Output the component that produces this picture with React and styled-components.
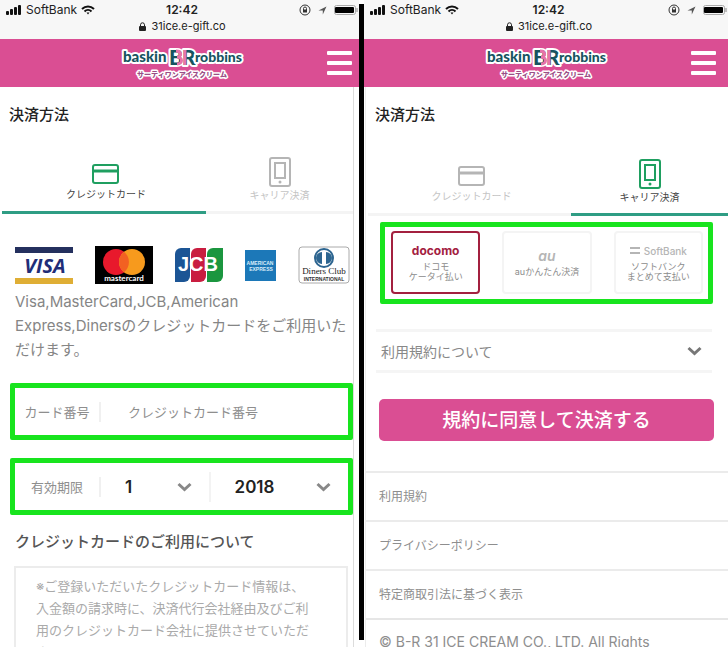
import React, { useState } from 'react';
import styled, { createGlobalStyle } from 'styled-components';

const GlobalStyle = createGlobalStyle`
* {
  box-sizing: border-box;
}
body {
  margin: 0;
  overflow: hidden;
  background: #fff;
  font-family: Inter, "Noto Sans CJK JP", sans-serif;
}
button, input, select {
  font-family: inherit;
}
`

const Page = styled.div`
display: grid;
grid-template-columns: minmax(0, 359fr) 5px minmax(0, 364fr);
height: 100vh;
overflow: hidden;
`

const Divider = styled.div`
background: #000;
margin: 4px 0 7px;
`

const Screen = styled.section`
display: flex;
flex-direction: column;
min-width: 0;
overflow: hidden;
`

const StatusBar = styled.div`
background: #f7f7f7;
height: 39px;
flex-shrink: 0;
padding-top: 2px;
color: #222;
font-size: 12px;
line-height: 16px;
`

const StatusRow = styled.div`
display: grid;
grid-template-columns: 1fr auto 1fr;
align-items: center;
padding: 0 1px 0 6px;
`

const StatusGroup = styled.div`
display: flex;
align-items: center;
justify-content: ${(p) => (p.$end ? 'flex-end' : 'flex-start')};
gap: ${(p) => (p.$end ? 7 : 4)}px;
`

const Clock = styled.strong`
font-weight: 600;
`

const Address = styled.div`
display: flex;
align-items: center;
justify-content: center;
gap: 5px;
padding-left: 6px;
font-size: 11px;
`

const Header = styled.header`
background: #da4e93;
height: 48px;
flex-shrink: 0;
display: grid;
grid-template-columns: 1fr auto 1fr;
align-items: center;
padding-right: ${(p) => p.$right}px;
`

const MenuButton = styled.button`
grid-column: 3;
justify-self: end;
display: flex;
flex-direction: column;
gap: 6px;
padding: 0;
border: none;
background: none;
`

const MenuBar = styled.span`
width: 25px;
height: 4px;
border-radius: 1px;
background: #fff;
`

const LogoLink = styled.a`
grid-column: 2;
display: block;
margin-left: 12px;
height: 40px;
`

const Content = styled.main`
flex: 1;
min-height: 0;
overflow: hidden;
margin-right: ${(p) => (p.$edge === 'right' ? 5 : 0)}px;
margin-left: ${(p) => (p.$edge === 'left' ? 1 : 0)}px;
border-right: ${(p) => (p.$edge === 'right' ? '1px solid #dcdcdc' : 'none')};
border-left: ${(p) => (p.$edge === 'left' ? '1px solid #ececec' : 'none')};
`

const Title = styled.h1`
margin: 0;
padding: 17px 8px 0 9px;
font-size: 15px;
line-height: 22px;
font-weight: 500;
color: #222;
`

const Tabs = styled.div`
display: grid;
grid-template-columns: ${(p) => (p.$low ? '203fr 157fr' : '204fr 147fr')};
margin: ${(p) => (p.$low ? '20px 0 0' : '18px 0 0')};
padding-left: 2px;
`

const Tab = styled.button`
display: flex;
flex-direction: column;
align-items: center;
justify-content: flex-end;
gap: ${(p) => (p.$phone ? 0 : 2)}px;
height: 70px;
padding: ${(p) => (p.$phone ? '0 0 8px' : '0 0 9px 4px')};
border: none;
border-bottom: 3px solid ${(p) => (p.$active ? '#2f9d84' : '#f4f4f4')};
background: none;
color: ${(p) => (p.$active ? '#444' : '#c4c4c4')};
font-size: 10px;
line-height: 15px;

svg {
  color: ${(p) => (p.$active ? '#1f9f60' : '#b5b5b5')};
}
`

const Brands = styled.div`
display: flex;
justify-content: space-between;
align-items: center;
padding: 32px 3px 0 15px;
`

const Lead = styled.p`
margin: 6px 0 0;
padding: 0 6px 0 15px;
font-size: 15px;
line-height: 24px;
color: #858585;
`

const Highlight = styled.div`
border: 5px solid #18e41e;
border-radius: 2px;
`

const FieldBox = styled(Highlight)`
display: flex;
align-items: center;
height: 57px;
margin: ${(p) => p.$top}px 0 0 10px;
color: #8e8e8e;
font-size: 13px;
`

const FieldLabel = styled.label`
width: 86px;
flex-shrink: 0;
text-align: center;
line-height: 20px;
border-right: 2px solid #f0f0f0;
`

const NumberInput = styled.input`
flex: 1;
min-width: 0;
height: 40px;
padding: 0 0 0 27px;
border: none;
outline: none;
background: none;
font-size: 13px;
color: #333;

&::placeholder {
  color: #8e8e8e;
  opacity: 1;
}
`

const SelectWrap = styled.div`
display: grid;
flex: ${(p) => p.$grow};
align-items: center;
border-left: ${(p) => (p.$line ? '2px solid #f3f3f3' : 'none')};

& > * {
  grid-area: 1 / 1;
}
svg {
  justify-self: end;
  margin-right: 17px;
  pointer-events: none;
}
`

const Select = styled.select`
appearance: none;
width: 100%;
height: 30px;
padding: 0 0 0 24px;
border: none;
outline: none;
background: none;
font-size: 17px;
font-weight: 600;
color: #222;
`

const Heading = styled.h2`
margin: 15px 0 0;
padding-left: 15px;
font-size: 15px;
line-height: 24px;
font-weight: 500;
color: #555;
`

const Terms = styled.p`
margin: 12px 5px 0 14px;
padding: 7px 12px 12px 20px;
border: 2px solid #ececec;
font-size: 13px;
line-height: 22px;
color: #aaa;
`

const Carriers = styled(Highlight)`
display: grid;
grid-template-columns: repeat(3, minmax(0, 1fr));
gap: 22px;
margin: 6px 15px 0 14px;
padding: 4px 5px 5px 6px;
`

const Carrier = styled.button`
display: flex;
flex-direction: column;
align-items: center;
justify-content: center;
gap: 4px;
height: 63px;
padding: 0;
border: 2px solid ${(p) => (p.$active ? '#a3203f' : '#f4f4f4')};
border-radius: 4px;
background: #fff;
color: #8c8c8c;
font-size: 9px;
line-height: 10px;
white-space: nowrap;
`

const CarrierName = styled.span`
display: flex;
align-items: center;
gap: 4px;
color: ${(p) => p.$color};
font-size: ${(p) => p.$size}px;
line-height: 14px;
font-weight: ${(p) => p.$weight};
font-style: ${(p) => (p.$italic ? 'italic' : 'normal')};
`

const Accordion = styled.button`
display: flex;
align-items: center;
justify-content: space-between;
width: calc(100% - 26px);
height: 44px;
margin: 25px 0 0 10px;
padding: 0 10px 0 5px;
border: none;
border-top: 3px solid #f5f5f5;
border-bottom: 3px solid #f5f5f5;
background: none;
font-size: 14px;
color: #888;
`

const PayButton = styled.button`
display: block;
width: calc(100% - 27px);
height: 42px;
margin: 26px 0 30px 13px;
padding: 0 0 4px;
border: none;
border-radius: 5px;
background: #da4e93;
color: #fff;
font-size: 19px;
font-weight: 500;
`

const FooterLink = styled.a`
display: block;
height: 49px;
padding-left: 13px;
border-top: 2px solid #ebebeb;
font-size: 12px;
line-height: 47px;
color: #8e8e8e;
text-decoration: none;
`

const Copyright = styled.p`
margin: 0;
padding: 12px 60px 0 13px;
border-top: 2px solid #e6e6e6;
font-size: 14px;
line-height: 20px;
color: #8e8e8e;
`

function Logo() {
  return (
    <LogoLink href="#" aria-label="baskin robbins">
      <svg width="124" height="40" viewBox="0 0 124 40">
        <g stroke="#fff" strokeWidth="4" strokeLinejoin="round" fontFamily="Lato, sans-serif" fontWeight="900" paintOrder="stroke">
          <text x="3" y="19" fontSize="15" fill="#17545f">baskin</text>
          <text x="49" y="22" fontSize="21" fill="#17545f">B</text>
          <text x="62" y="22" fontSize="21" fill="#17545f">R</text>
          <text x="75" y="19" fontSize="14" fill="#17545f">robbins</text>
          <text x="62" y="34" fontSize="7" strokeWidth="3" textAnchor="middle" fill="#9a4f86" fontFamily='"Noto Sans CJK JP", sans-serif'>サーティワンアイスクリーム</text>
        </g>
        <path d="M56 8c6 0 6 6 1 6c6 0 6 7 0 7M65 7v15" fill="none" stroke="#e873aa" strokeWidth="3" />
      </svg>
    </LogoLink>
  );
}

function Top({ right }) {
  return (
    <>
      <StatusBar>
        <StatusRow>
          <StatusGroup>
            <svg width="16" height="10" viewBox="0 0 16 10" fill="#111">
              <rect x="0" y="6" width="3" height="4" rx="1" />
              <rect x="4" y="4" width="3" height="6" rx="1" />
              <rect x="8" y="2" width="3" height="8" rx="1" />
              <rect x="12" y="0" width="3" height="10" rx="1" />
            </svg>
            <span>SoftBank</span>
            <svg width="14" height="10" viewBox="0 0 14 10" fill="none" stroke="#111" strokeWidth="2">
              <path d="M1 4C4.500.6 9.500.6 13 4" />
              <path d="M3.500 6.500c2-2 5-2 7 0" />
              <path d="M5.500 7.500h3L7 9.500z" fill="#111" stroke="none" />
            </svg>
          </StatusGroup>
          <Clock>12:42</Clock>
          <StatusGroup $end>
            <svg width="12" height="12" viewBox="0 0 12 12" fill="none" stroke="#333">
              <circle cx="6" cy="6" r="5" />
              <rect x="4" y="5.500" width="4" height="3" fill="#333" stroke="none" />
              <path d="M4.500 6V4.500a1.500 1.500 0 0 1 3 0V6" />
            </svg>
            <svg width="9" height="9" viewBox="0 0 9 9">
              <path d="M.5 4.500 8.500.5 4.800 8.500V4.500z" fill="#555" />
            </svg>
            <svg width="24" height="10" viewBox="0 0 24 10">
              <rect x=".5" y=".5" width="21" height="9" rx="2" fill="none" stroke="#aaa" />
              <rect x="1" y="2" width="19" height="6" rx="1" fill="#000" />
              <path d="M23 3v4" stroke="#888" />
            </svg>
          </StatusGroup>
        </StatusRow>
        <Address>
          <svg width="7" height="9" viewBox="0 0 7 9">
            <rect y="4" width="7" height="5" rx="1" fill="#222" />
            <path d="M1.500 4V2.800a2 2 0 0 1 4 0V4" fill="none" stroke="#222" />
          </svg>
          <span>31ice.e-gift.co</span>
        </Address>
      </StatusBar>
      <Header $right={right}>
        <Logo />
        <MenuButton type="button" aria-label="menu">
          <MenuBar />
          <MenuBar />
          <MenuBar />
        </MenuButton>
      </Header>
    </>
  );
}

function CardIcon() {
  return (
    <svg width="28" height="22" viewBox="0 0 28 22" fill="none" stroke="currentColor" strokeWidth="2">
      <rect x="1" y="2" width="25" height="18" rx="2" />
      <path d="M1 8h25" strokeWidth="3" />
    </svg>
  );
}

function PhoneIcon() {
  return (
    <svg width="22" height="31" viewBox="0 0 22 31" fill="none" stroke="currentColor" strokeWidth="2">
      <rect x="1" y="1" width="20" height="28" rx="2" />
      <rect x="6" y="6" width="10" height="15" />
      <circle cx="11" cy="25" r="1.500" fill="currentColor" stroke="none" />
    </svg>
  );
}

function Chevron({ color = '#888' }) {
  return (
    <svg width="15" height="10" viewBox="0 0 15 10" fill="none" stroke={color} strokeWidth="3">
      <path d="M1.500 2 7.500 7.500 13.500 2" />
    </svg>
  );
}

function PayTabs({ active, low }) {
  return (
    <Tabs $low={low}>
      <Tab type="button" $active={active === 'card'}>
        <CardIcon />
        クレジットカード
      </Tab>
      <Tab type="button" $phone $active={active === 'carrier'}>
        <PhoneIcon />
        キャリア決済
      </Tab>
    </Tabs>
  );
}

function BrandLogos() {
  return (
    <Brands>
      <svg width="58" height="37" viewBox="0 0 58 37">
        <rect width="58" height="6" fill="#24305e" />
        <rect y="31" width="58" height="6" fill="#dfae35" />
        <text x="30" y="26" textAnchor="middle" fontFamily='"Open Sans", sans-serif' fontSize="20" fontWeight="700" fontStyle="italic" fill="#1f2d78">VISA</text>
      </svg>
      <svg width="58" height="38" viewBox="0 0 58 38">
        <rect width="58" height="38" fill="#000" />
        <circle cx="21" cy="16" r="13" fill="#e8192c" />
        <circle cx="37" cy="16" r="13" fill="#f79a1d" />
        <path d="M29 5.800a13 13 0 0 1 0 20.400a13 13 0 0 1 0-20.400" fill="#f26122" />
        <text x="29" y="35" textAnchor="middle" fontFamily="Lato, sans-serif" fontSize="8" fontWeight="700" fill="#fff">mastercard</text>
      </svg>
      <svg width="48" height="34" viewBox="0 0 48 34">
        <path d="M6 0h9v28a6 6 0 0 1-6 6H0V6a6 6 0 0 1 6-6" fill="#1c5595" />
        <path d="M22 0h9v28a6 6 0 0 1-6 6h-9V6a6 6 0 0 1 6-6" fill="#c91d40" />
        <path d="M38 0h10v28a6 6 0 0 1-6 6H32V6a6 6 0 0 1 6-6" fill="#1b963f" />
        <text x="23" y="23" textAnchor="middle" fontFamily='"Liberation Sans", sans-serif' fontSize="20" fontWeight="700" fill="#fff">JCB</text>
      </svg>
      <svg width="31" height="31" viewBox="0 0 31 31">
        <rect width="31" height="31" fill="#1c78b8" />
        <g fontFamily='"Liberation Sans", sans-serif' fontWeight="700" fill="#d9ecf8" textAnchor="middle">
          <text x="15" y="15" fontSize="5">AMERICAN</text>
          <text x="16" y="21" fontSize="5">EXPRESS</text>
        </g>
      </svg>
      <svg width="52" height="38" viewBox="0 0 52 38">
        <rect x="1" y="1" width="50" height="36" rx="3" fill="#fff" stroke="#aaa" />
        <circle cx="26" cy="12" r="9" fill="#fff" stroke="#2d6590" strokeWidth="2" />
        <path d="M24 6a6 6 0 0 0 0 12zM28 6a6 6 0 0 1 0 12z" fill="#2d6590" />
        <text x="26" y="28" textAnchor="middle" fontFamily='"Liberation Serif", serif' fontSize="9" fill="#222">Diners Club</text>
        <text x="26" y="35" textAnchor="middle" fontFamily='"Liberation Sans", sans-serif' fontSize="5" fontWeight="700" fill="#333">INTERNATIONAL</text>
      </svg>
    </Brands>
  );
}

function CardScreen() {
  const [number, setNumber] = useState("");
  const [month, setMonth] = useState("1");
  const [year, setYear] = useState("2018");

  return (
    <Screen>
      <Top right={7} />
      <Content $edge="right">
        <Title>決済方法</Title>
        <PayTabs active="card" />
        <BrandLogos />
        <Lead>
          Visa,MasterCard,JCB,American<br />
          Express,Dinersのクレジットカードをご利用いただけます。
        </Lead>
        <FieldBox $top={21}>
          <FieldLabel htmlFor="number">カード番号</FieldLabel>
          <NumberInput id="number" type="text" value={number}
            onChange={(e) => setNumber(e.target.value)}
            placeholder="クレジットカード番号" />
        </FieldBox>
        <FieldBox $top={18}>
          <FieldLabel htmlFor="month">有効期限</FieldLabel>
          <SelectWrap $grow={108}>
            <Select id="month" value={month} onChange={(e) => setMonth(e.target.value)}>
              <option>1</option>
              <option>2</option>
              <option>3</option>
            </Select>
            <Chevron />
          </SelectWrap>
          <SelectWrap $line $grow={138}>
            <Select aria-label="有効期限" value={year} onChange={(e) => setYear(e.target.value)}>
              <option>2018</option>
              <option>2019</option>
              <option>2020</option>
            </Select>
            <Chevron />
          </SelectWrap>
        </FieldBox>
        <Heading>クレジットカードのご利用について</Heading>
        <Terms>
          ※ご登録いただいたクレジットカード情報は、<br />
          入金額の請求時に、決済代行会社経由及びご利<br />
          用のクレジットカード会社に提供させていただ<br />
          きます。
        </Terms>
      </Content>
    </Screen>
  );
}

function CarrierScreen() {
  const [carrier, setCarrier] = useState("docomo");

  return (
    <Screen>
      <Top right={12} />
      <Content $edge="left">
        <Title>決済方法</Title>
        <PayTabs active="carrier" low />
        <Carriers>
          <Carrier type="button" $active={carrier === 'docomo'} onClick={() => setCarrier("docomo")}>
            <CarrierName $color="#a3203f" $size={12} $weight={700}>docomo</CarrierName>
            <span>ドコモ<br />ケータイ払い</span>
          </Carrier>
          <Carrier type="button" $active={carrier === 'au'} onClick={() => setCarrier("au")}>
            <CarrierName $color="#b5b5b5" $size={14} $weight={600} $italic>au</CarrierName>
            <span>auかんたん決済</span>
          </Carrier>
          <Carrier type="button" $active={carrier === 'softbank'} onClick={() => setCarrier("softbank")}>
            <CarrierName $color="#b5b5b5" $size={10} $weight={500}>
              <svg width="10" height="8" viewBox="0 0 10 8" fill="#b5b5b5">
                <rect width="10" height="2" />
                <rect y="5" width="10" height="2" />
              </svg>
              SoftBank
            </CarrierName>
            <span>ソフトバンク<br />まとめて支払い</span>
          </Carrier>
        </Carriers>
        <Accordion type="button">
          利用規約について
          <Chevron color="#777" />
        </Accordion>
        <PayButton type="button">規約に同意して決済する</PayButton>
        <FooterLink href="#">利用規約</FooterLink>
        <FooterLink href="#">プライバシーポリシー</FooterLink>
        <FooterLink href="#">特定商取引法に基づく表示</FooterLink>
        <Copyright>© B-R 31 ICE CREAM CO., LTD. All Rights Reserved.</Copyright>
      </Content>
    </Screen>
  );
}

function App() {
  return (
    <>
      <GlobalStyle />
      <Page>
        <CardScreen />
        <Divider />
        <CarrierScreen />
      </Page>
    </>
  );
}

export default App;
